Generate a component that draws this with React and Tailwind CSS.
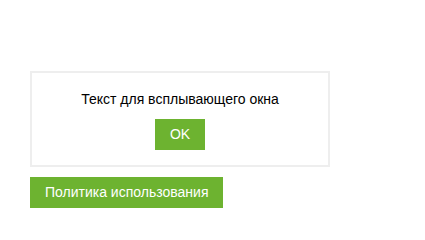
export default function App() {
  return (
    <div className="pl-[30px] pt-[71px] font-['Liberation_Sans',Arial,sans-serif] text-[14px]">
      {/* Popup box */}
      <div className="flex w-[300px] h-[96px] flex-col items-center border-2 border-[#eeeeee] bg-white pt-[18px]">
        <p className="leading-[16px] text-black">Текст для всплывающего окна</p>
        <button className="mt-[12px] h-[31px] w-[50px] bg-[#6db330] text-white">OK</button>
      </div>

      <button className="mt-[10px] h-[31px] px-[15px] bg-[#6db330] text-white">
        Политика использования
      </button>
    </div>
  )
}
